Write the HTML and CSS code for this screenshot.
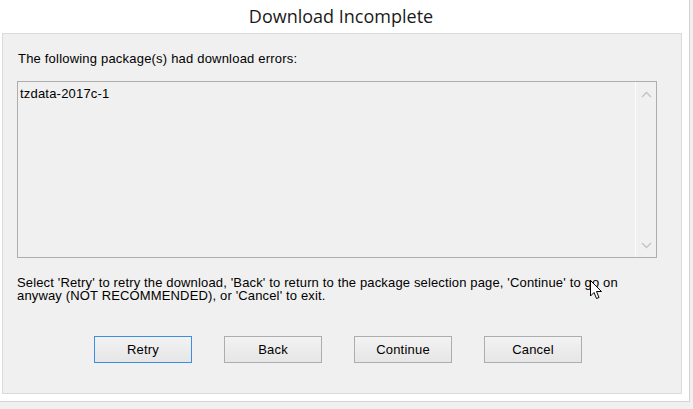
FILE: index.html
```html
<!DOCTYPE html>
<html lang="en">
   <head>
      <title>Download Incomplete</title>
      <meta charset="UTF-8">
      <link rel="stylesheet" href="styles.css">
   </head>
   <body>
      <div class="window">
         <h1 class="title">Download Incomplete</h1>
         <div class="panel">
            <p class="intro">The following package(s) had download errors:</p>
            <div class="list">
               <div class="items">
                  <div class="item">tzdata-2017c-1</div>
               </div>
               <div class="scroll">
                  <svg width="11" height="7" viewBox="0 0 11 7"><path d="M1 6 L5.5 1.5 L10 6" fill="none" stroke="#c4c4c4" stroke-width="1.4"/></svg>
                  <svg width="11" height="7" viewBox="0 0 11 7"><path d="M1 1 L5.5 5.5 L10 1" fill="none" stroke="#c4c4c4" stroke-width="1.4"/></svg>
               </div>
            </div>
            <p class="note">Select 'Retry' to retry the download, 'Back' to return to the package selection page, 'Continue' to go on anyway (NOT RECOMMENDED), or 'Cancel' to exit.</p>
            <div class="buttons">
               <button class="btn default">Retry</button>
               <button class="btn">Back</button>
               <button class="btn">Continue</button>
               <button class="btn">Cancel</button>
            </div>
         </div>
         <svg class="cursor" width="13" height="20" viewBox="0 0 13 20"><path d="M0.5 0.5 L0.5 16 L4 12.5 L6.5 18.5 L9 17.5 L6.5 11.5 L11.5 11.5 Z" fill="#fff" stroke="#000" stroke-width="1"/></svg>
      </div>
   </body>
</html>
```

FILE: styles.css
```css
*
{ box-sizing:border-box;}
html, body
{ margin:0;
  background-color:#f0f0f0;}
.window
{ position:relative;
  width:690px;
  height:402px;
  background-color:#fff;
  border-right:1px solid #d4d4d4;
  border-bottom:1px solid #d4d4d4;
  font-family:"Liberation Sans", Arial, sans-serif;
  font-size:13px;
  letter-spacing:0.2px;
  color:#000;}
.title
{ margin:0;
  height:33px;
  padding-top:4px;
  padding-right:7px;
  text-align:center;
  font-family:"Open Sans", "Noto Sans", sans-serif;
  font-weight:normal;
  font-size:18px;
  letter-spacing:0;
  line-height:24px;
  color:#1a1a1a;}
.panel
{ margin-left:2px;
  width:680px;
  height:361px;
  border:1px solid #dadada;
  background-color:#f0f0f0;
  padding:18px 0 0 14px;}
.intro
{ margin:0 0 15px;
  padding-left:1px;
  line-height:14px;}
.list
{ display:flex;
  width:640px;
  height:177px;
  border:1px solid #adadad;
  background-color:#f0f0f0;}
.items
{ flex:1;
  padding:5px 2px;
  line-height:14px;}
.scroll
{ width:21px;
  border-left:1px solid #fbfbfb;
  display:flex;
  flex-direction:column;
  justify-content:space-between;
  align-items:center;
  padding:9px 0 8px;}
.note
{ margin:18px 0 0;
  width:615px;
  letter-spacing:0.15px;
  line-height:13px;}
.buttons
{ display:flex;
  gap:32px;
  margin:34px 0 0 77px;}
.btn
{ width:98px;
  height:27px;
  border:1px solid #adadad;
  background:linear-gradient(#f2f2f2, #e6e6e6);
  font-family:"Liberation Sans", Arial, sans-serif;
  font-size:13px;
  letter-spacing:0.2px;
  color:#000;
  padding:0;}
.btn.default
{ border-color:#3c8fe0;}
.cursor
{ position:absolute;
  left:590px;
  top:280px;}
```
